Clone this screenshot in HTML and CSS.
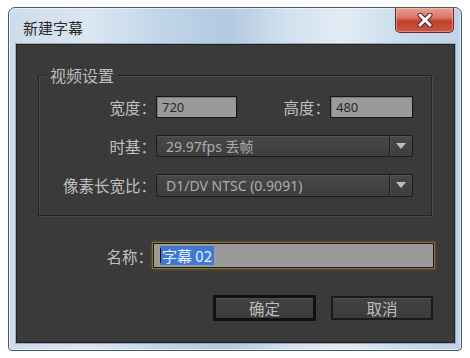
FILE: index.html
```html
<!DOCTYPE html>
<html lang="zh-CN">
<head>
<meta charset="utf-8">
<title>新建字幕</title>
<link rel="stylesheet" href="styles.css">
</head>
<body>
<div class="window">
  <div class="titlebar">
    <span class="title">新建字幕</span>
    <button class="close" type="button" aria-label="关闭">
      <svg width="20" height="14" viewBox="0 0 20 14">
        <path d="M5 2 L15 12 M15 2 L5 12" stroke="#5a1d1a" stroke-width="5" stroke-linecap="round"/>
        <path d="M5 2 L15 12 M15 2 L5 12" stroke="#ffffff" stroke-width="3" stroke-linecap="round"/>
      </svg>
    </button>
  </div>
  <div class="content">
    <div class="group">
      <span class="group-title">视频设置</span>
      <div class="row">
        <label class="label">宽度：</label>
        <div class="pair">
          <div class="field w1">720</div>
          <label class="label sub">高度：</label>
          <div class="field w2">480</div>
        </div>
      </div>
      <div class="row">
        <label class="label">时基：</label>
        <div class="select"><span class="sel-text">29.97fps 丢帧</span><span class="arrow"></span></div>
      </div>
      <div class="row">
        <label class="label">像素长宽比：</label>
        <div class="select tall"><span class="sel-text">D1/DV NTSC (0.9091)</span><span class="arrow"></span></div>
      </div>
    </div>
    <div class="name-row">
      <label class="label name-label">名称：</label>
      <div class="name-field"><span class="sel"><span class="caret"></span>字幕 02</span></div>
    </div>
    <div class="buttons">
      <button class="btn default" type="button">确定</button>
      <button class="btn" type="button">取消</button>
    </div>
  </div>
</div>
</body>
</html>
```

FILE: styles.css
```css
html, body {
  margin: 0;
  padding: 0;
  background: #ffffff;
}
body {
  font-family: "Noto Sans CJK SC", "Noto Sans", sans-serif;
  width: 470px;
  height: 358px;
  overflow: hidden;
}
.window {
  position: relative;
  box-sizing: border-box;
  margin: 7px 0 0 8px;
  width: 454px;
  height: 344px;
  border: 1px solid #4b5866;
  border-radius: 7px 7px 4px 4px;
  padding: 0 6px 6px 7px;
  background:
    linear-gradient(90deg, #cddcea 0%, #dbe7f2 18%, #c3d7ea 32%, #b2c9e0 48%, #d3e2ef 62%, #e2ecf5 74%, #c8dbec 88%, #bed3e8 100%);
  box-shadow: inset 0 0 0 1px rgba(255,255,255,0.55);
}
.titlebar {
  height: 36px;
  box-sizing: border-box;
  padding: 7px 0 0 7px;
}
.title {
  font-size: 15px;
  line-height: 22px;
  color: #2a2a2a;
}
.close {
  position: absolute;
  top: 0;
  right: 7px;
  width: 59px;
  height: 25px;
  padding: 0;
  border: 1px solid #6e2622;
  border-top: none;
  border-radius: 0 0 5px 5px;
  background: linear-gradient(#e4a092 0%, #d8776a 40%, #c2402f 55%, #c95543 100%);
  box-shadow: inset 0 0 0 1px rgba(255,210,200,0.45);
  display: flex;
  align-items: center;
  justify-content: center;
}
.content {
  box-sizing: border-box;
  height: 299px;
  background: #3a3a3a;
  border: 1px solid #202428;
  box-shadow: 0 0 0 1px #9eabb8;
  display: flex;
  flex-direction: column;
  color: #bdbdbd;
}
.group {
  position: relative;
  box-sizing: border-box;
  margin: 30px 0 0 21px;
  width: 394px;
  height: 141px;
  border: 1px solid #232323;
  box-shadow: 1px 1px 0 #4a4a4a, inset 1px 1px 0 #4a4a4a;
  padding: 20px 18px 0 10px;
  display: flex;
  flex-direction: column;
  gap: 17px;
}
.group-title {
  position: absolute;
  top: -12px;
  left: 7px;
  padding: 0 4px;
  background: #3a3a3a;
  font-size: 16px;
  line-height: 22px;
  color: #bcbcbc;
}
.row {
  display: flex;
  align-items: center;
  height: 22px;
}
.label {
  font-size: 15.5px;
  color: #c0c0c0;
  text-align: right;
  white-space: nowrap;
}
.row > .label {
  width: 107px;
  flex: none;
}
.pair {
  display: flex;
  align-items: center;
  width: 258px;
}
.label.sub {
  flex: 1;
  padding-right: 0;
}
.field {
  box-sizing: border-box;
  height: 22px;
  background: #9a9a9a;
  border: 1px solid #161616;
  box-shadow: inset 1px 1px 0 #7a7a7a;
  font-family: "Noto Sans", "Noto Sans CJK SC", sans-serif;
  font-size: 13px;
  line-height: 20px;
  color: #2a2a2a;
  padding-left: 5px;
}
.w1 { width: 81px; }
.w2 { width: 83px; }
.select {
  box-sizing: border-box;
  position: relative;
  width: 258px;
  height: 22px;
  display: flex;
  align-items: center;
  background: linear-gradient(#484848, #3d3d3d);
  border: 1px solid #1b1b1b;
  border-radius: 2px;
  box-shadow: inset 0 1px 0 #555;
}
.select.tall { height: 23px; }
.sel-text {
  flex: 1;
  padding-left: 9px;
  font-family: "Noto Sans", "Noto Sans CJK SC", sans-serif;
  font-size: 14px;
  color: #adadad;
  white-space: nowrap;
}
.arrow {
  width: 22px;
  align-self: stretch;
  border-left: 1px solid #202020;
  box-shadow: inset 1px 0 0 #505050;
  display: flex;
  align-items: center;
  justify-content: center;
}
.arrow::after {
  content: "";
  width: 0;
  height: 0;
  border-left: 5px solid transparent;
  border-right: 5px solid transparent;
  border-top: 6px solid #bdbdbd;
}
.name-row {
  display: flex;
  align-items: center;
  margin-top: 27px;
}
.name-label {
  width: 136px;
  flex: none;
}
.name-field {
  box-sizing: border-box;
  width: 281px;
  height: 25px;
  background: #9a9a9a;
  border: 1px solid #1c1a16;
  box-shadow: 0 0 0 1px #8e7134, 0 0 3px 1px rgba(170,130,50,0.55);
  padding: 2px 0 2px 6px;
  display: flex;
}
.sel {
  display: flex;
  align-items: center;
  background: #3d7ad0;
  color: #e8f0fc;
  font-size: 15px;
  padding-right: 2px;
  white-space: nowrap;
}
.caret {
  width: 1px;
  height: 15px;
  background: #111;
  margin-right: 1px;
}
.buttons {
  display: flex;
  justify-content: flex-end;
  gap: 15px;
  margin-top: 27px;
  padding-right: 21px;
}
.btn {
  box-sizing: border-box;
  width: 102px;
  height: 24px;
  padding: 0;
  margin-top: 1px;
  background: linear-gradient(#424242, #3b3b3b);
  border: 2px solid #1a1a1a;
  border-radius: 1px;
  box-shadow: inset 0 1px 0 #505050;
  font-family: "Noto Sans CJK SC", sans-serif;
  font-size: 15.5px;
  color: #bdbdbd;
  line-height: 20px;
}
.btn.default {
  width: 103px;
  height: 26px;
  margin-top: 0;
  border: 3px solid #111111;
}
```
